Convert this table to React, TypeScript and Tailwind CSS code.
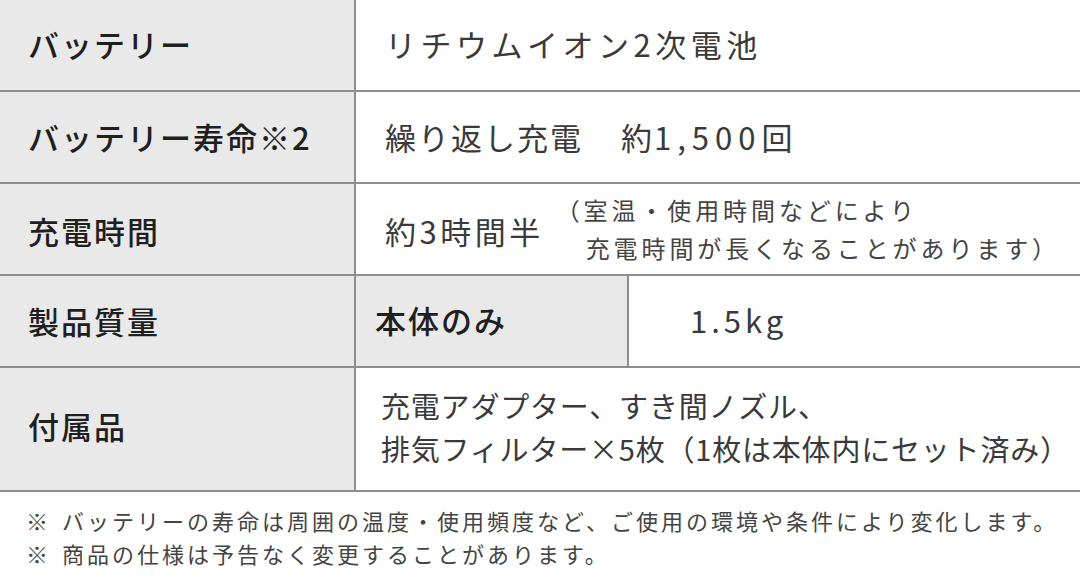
import React from 'react';

const FONT = { fontFamily: '"Noto Sans CJK JP", "Noto Sans", sans-serif' };

const headCell =
  'flex items-center pl-[28px] bg-[#e9e9e9] border-r-2 border-[#8e8e8e] text-[31px] font-medium tracking-[2px] text-[#1f1f1f]';
const valueCell = 'flex items-center pl-[29px] text-[31px] tracking-[2px] text-[#3a3a3a]';

export default function App() {
  return (
    <div className="w-[1080px] h-[582px] bg-white overflow-hidden" style={FONT}>
      {/* Spec table */}
      <div className="grid grid-cols-[356px_1fr]">
        {/* Battery */}
        <div className={`${headCell} h-[92px] border-b-2 border-b-[#8e8e8e]`}>
          <span className="-mt-[2px]">バッテリー</span>
        </div>
        <div className={`${valueCell} h-[92px] border-b-2 border-[#8e8e8e] tracking-[4.5px]`}>
          <span className="-mt-[2px]">リチウムイオン2次電池</span>
        </div>

        {/* Battery life */}
        <div className={`${headCell} h-[92px] border-b-2 border-b-[#8e8e8e]`}>
          <span>バッテリー寿命※2</span>
        </div>
        <div className={`${valueCell} h-[92px] border-b-2 border-[#8e8e8e]`}>
          <span>繰り返し充電</span>
          <span className="ml-[38px]">
            約<span className="tracking-[6px]">1,500</span>回
          </span>
        </div>

        {/* Charge time */}
        <div className={`${headCell} h-[92px] border-b-2 border-b-[#8e8e8e]`}>
          <span className="mt-[4px]">充電時間</span>
        </div>
        <div className={`${valueCell} h-[92px] border-b-2 border-[#8e8e8e]`}>
          <span className="mt-[4px] tracking-[3.5px]">約3時間半</span>
          <div className="ml-[12px] text-[24px] tracking-[3.9px] leading-[38px] text-[#444]">
            <div>（室温・使用時間などにより</div>
            <div className="pl-[30px]">充電時間が長くなることがあります）</div>
          </div>
        </div>

        {/* Weight */}
        <div className={`${headCell} h-[92px] border-b-2 border-b-[#8e8e8e]`}>
          <span>製品質量</span>
        </div>
        <div className="grid grid-cols-[273px_1fr] h-[92px] border-b-2 border-[#8e8e8e]">
          <div className="flex items-center pl-[19px] bg-[#e9e9e9] border-r-2 border-[#8e8e8e] text-[31px] font-medium tracking-[2px] text-[#1f1f1f]">
            <span className="-mt-[2px]">本体のみ</span>
          </div>
          <div className="flex items-center pl-[61px] text-[31px] tracking-[4px] text-[#3a3a3a]">
            <span className="-mt-[2px]">1.5kg</span>
          </div>
        </div>

        {/* Accessories */}
        <div className={`${headCell} h-[124px] border-b-2 border-b-[#8e8e8e]`}>
          <span className="-mt-[6px]">付属品</span>
        </div>
        <div className="flex flex-col justify-center pl-[25px] h-[124px] border-b-2 border-[#8e8e8e] text-[29px] tracking-[0.8px] leading-[43px] text-[#3a3a3a]">
          <div className="-mt-[4px]">充電アダプター、すき間ノズル、</div>
          <div>排気フィルター×5枚（1枚は本体内にセット済み）</div>
        </div>
      </div>

      {/* Notes */}
      <div className="pt-[12px] pl-[26px] text-[22px] leading-[33px] text-[#444]">
        <div className="flex">
          <span className="w-[36px]">※</span>
          <span className="tracking-[3px]">バッテリーの寿命は周囲の温度・使用頻度など、ご使用の環境や条件により変化します。</span>
        </div>
        <div className="flex">
          <span className="w-[36px]">※</span>
          <span className="tracking-[3px]">商品の仕様は予告なく変更することがあります。</span>
        </div>
      </div>
    </div>
  );
}
